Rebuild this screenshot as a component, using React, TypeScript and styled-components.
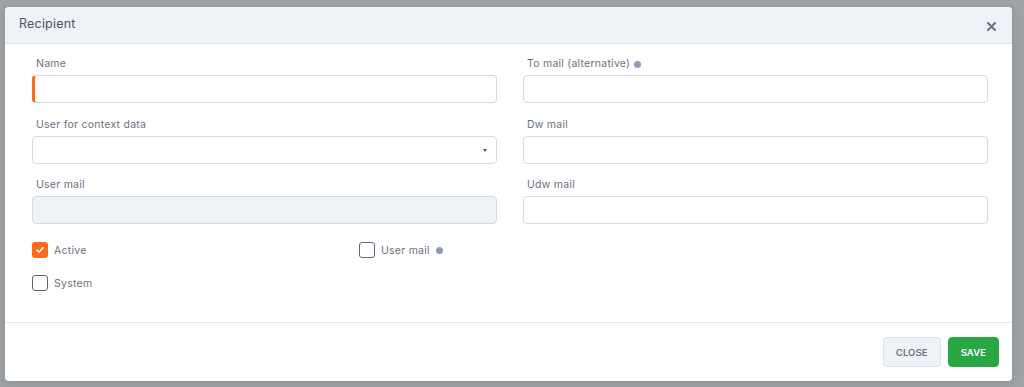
import styled, { createGlobalStyle } from "styled-components";

const GlobalStyle = createGlobalStyle`
  html, body {
    margin: 0;
    padding: 0;
    background: #9ea3a7;
  }
  body {
    font-family: Inter, "Noto Sans", "Liberation Sans", sans-serif;
  }
`;

const Backdrop = styled.div`
  width: 1024px;
  height: 387px;
  padding: 7px 12px 0 5px;
  box-sizing: border-box;
  background: #9ea3a7;
`;

const Modal = styled.div`
  width: 1007px;
  height: 374px;
  background: #fff;
  border-radius: 4px;
  overflow: hidden;
  display: flex;
  flex-direction: column;
  box-shadow: 0 2px 10px rgba(0, 0, 0, 0.12);
`;

const Header = styled.div`
  height: 37px;
  box-sizing: border-box;
  background: #eff2f7;
  border-bottom: 1px solid #dde2ea;
  display: flex;
  align-items: center;
  justify-content: space-between;
  padding: 0 14px 3px 14px;
`;

const Title = styled.h5`
  margin: 0;
  font-size: 12.5px;
  font-weight: 400;
  letter-spacing: 0.2px;
  color: #4b5565;
`;

const CloseX = styled.button`
  border: none;
  background: none;
  padding: 0;
  width: 14px;
  height: 14px;
  display: flex;
  align-items: center;
  justify-content: center;
  margin-top: 5px;
`;

const Body = styled.div`
  flex: 1;
  padding: 13px 24px 0 27px;
  border-bottom: 1px solid #e4e7ec;
`;

const FieldGrid = styled.div`
  display: grid;
  grid-template-columns: 465px 465px;
  column-gap: 26px;
  row-gap: 14.5px;
`;

const Field = styled.div`
  display: flex;
  flex-direction: column;
`;

const Label = styled.label`
  display: flex;
  align-items: center;
  gap: 4px;
  font-size: 10.5px;
  line-height: 14px;
  letter-spacing: 0.25px;
  color: #6b7280;
  padding-left: 4px;
  margin-bottom: 4px;
`;

const Dot = styled.span`
  width: 7px;
  height: 7px;
  border-radius: 50%;
  background: #8e9bb2;
  display: inline-block;
`;

const Input = styled.div<{ $required?: boolean; $disabled?: boolean }>`
  position: relative;
  height: 28px;
  box-sizing: border-box;
  border: 1px solid #d5dae2;
  border-radius: 4px;
  background: ${(p) => (p.$disabled ? "#eff2f7" : "#fff")};
  ${(p) => (p.$required ? "border-left: 3px solid #fd6b1c;" : "")}
`;

const Caret = styled.span`
  position: absolute;
  right: 9px;
  top: 12px;
  width: 0;
  height: 0;
  border-left: 2.5px solid transparent;
  border-right: 2.5px solid transparent;
  border-top: 3px solid #4b5565;
`;

const Checks = styled.div`
  display: grid;
  grid-template-columns: 327px 1fr;
  row-gap: 17px;
  margin-top: 18px;
`;

const CheckRow = styled.div`
  display: flex;
  align-items: center;
  gap: 6px;
  font-size: 10.5px;
  letter-spacing: 0.25px;
  color: #6b7280;
`;

const Box = styled.span<{ $checked?: boolean }>`
  width: 16px;
  height: 16px;
  box-sizing: border-box;
  border-radius: 3px;
  display: flex;
  align-items: center;
  justify-content: center;
  background: ${(p) => (p.$checked ? "#fd6b1c" : "#fff")};
  border: ${(p) => (p.$checked ? "none" : "1.5px solid #5d6780")};
`;

const Footer = styled.div`
  height: 58px;
  box-sizing: border-box;
  display: flex;
  justify-content: flex-end;
  align-items: flex-start;
  gap: 7px;
  padding: 14px 13px 0 0;
`;

const Button = styled.button<{ $primary?: boolean }>`
  height: 30px;
  padding: 0 12px;
  border-radius: 4px;
  font-family: inherit;
  font-size: 9.5px;
  font-weight: 600;
  letter-spacing: 0.1px;
  border: 1px solid ${(p) => (p.$primary ? "#28a745" : "#dde3ec")};
  background: ${(p) => (p.$primary ? "#28a745" : "#eff2f7")};
  color: ${(p) => (p.$primary ? "#fff" : "#6b7280")};
`;

const CheckMark = () => (
  <svg width="10" height="10" viewBox="0 0 10 10">
    <path d="M2 5.2 L4.1 7.2 L8 2.8" fill="none" stroke="#fff" strokeWidth="1.6" strokeLinecap="round" strokeLinejoin="round" />
  </svg>
);

export default function App() {
  return (
    <>
      <GlobalStyle />
      <Backdrop>
        <Modal>
          <Header>
            <Title>Recipient</Title>
            <CloseX>
              <svg width="9" height="9" viewBox="0 0 9 9">
                <path d="M1 1 L8 8 M8 1 L1 8" stroke="#6b7280" strokeWidth="2" strokeLinecap="round" />
              </svg>
            </CloseX>
          </Header>
          <Body>
            <FieldGrid>
              <Field>
                <Label>Name</Label>
                <Input $required />
              </Field>
              <Field>
                <Label>
                  To mail (alternative) <Dot />
                </Label>
                <Input />
              </Field>
              <Field>
                <Label>User for context data</Label>
                <Input>
                  <Caret />
                </Input>
              </Field>
              <Field>
                <Label>Dw mail</Label>
                <Input />
              </Field>
              <Field>
                <Label>User mail</Label>
                <Input $disabled />
              </Field>
              <Field>
                <Label>Udw mail</Label>
                <Input />
              </Field>
            </FieldGrid>
            <Checks>
              <CheckRow>
                <Box $checked>
                  <CheckMark />
                </Box>
                Active
              </CheckRow>
              <CheckRow>
                <Box />
                User mail <Dot />
              </CheckRow>
              <CheckRow>
                <Box />
                System
              </CheckRow>
            </Checks>
          </Body>
          <Footer>
            <Button>CLOSE</Button>
            <Button $primary>SAVE</Button>
          </Footer>
        </Modal>
      </Backdrop>
    </>
  );
}
